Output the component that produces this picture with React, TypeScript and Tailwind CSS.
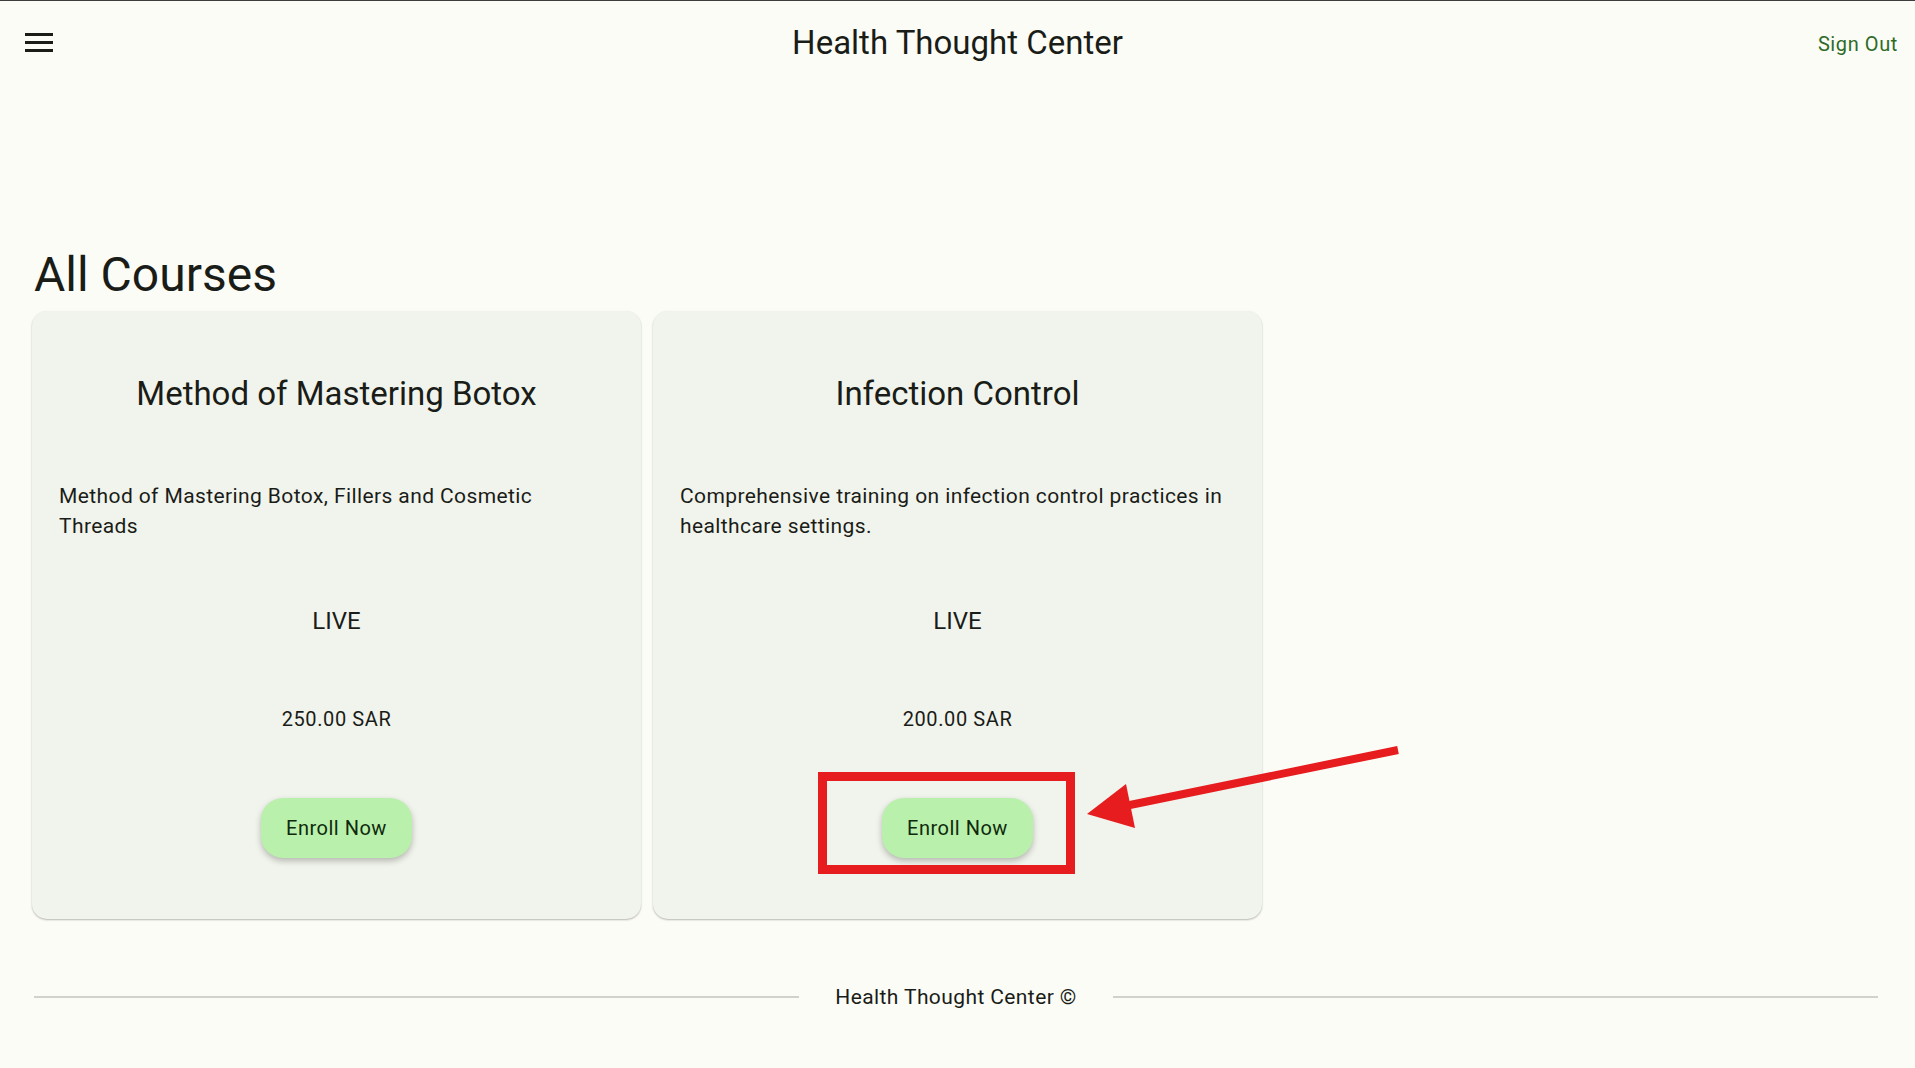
import React from "react";

type Course = { title: string; description: string; kind: string; price: string };

const courses: Course[] = [
  {
    title: "Method of Mastering Botox",
    description: "Method of Mastering Botox, Fillers and Cosmetic Threads",
    kind: "LIVE",
    price: "250.00 SAR",
  },
  {
    title: "Infection Control",
    description: "Comprehensive training on infection control practices in healthcare settings.",
    kind: "LIVE",
    price: "200.00 SAR",
  },
];

function CourseCard({ c }: { c: Course }) {
  return (
    <div className="w-[609px] h-[608px] shrink-0 rounded-[15px] bg-[#f1f4ec] shadow-[0_1px_2px_rgba(0,0,0,0.28)] flex flex-col items-center pt-[63px] pl-[27px] pr-[27px]">
      <h2 className="text-[33px] leading-[40px] text-[#1a1c18] font-normal text-center">{c.title}</h2>
      <p className="mt-[67px] self-start max-w-[549px] text-[21px] leading-[30px] tracking-[0.4px] text-[#1a1c18]">
        {c.description}
      </p>
      <div className="mt-[64px] text-[24px] leading-[32px] text-[#1a1c18]">{c.kind}</div>
      <div className="mt-[67px] text-[20px] leading-[30px] tracking-[0.6px] text-[#1a1c18]">{c.price}</div>
      <button className="mt-[64px] h-[60px] px-[25px] rounded-[22px] bg-[#b9f0ab] text-[#0f2a0c] text-[20px] leading-[30px] tracking-[0.5px] shadow-[0_3px_6px_rgba(0,0,0,0.25)]">
        Enroll Now
      </button>
    </div>
  );
}

export default function App() {
  return (
    <div className="relative min-h-screen w-full bg-[#fbfcf6] border-t border-[#3d3d3d] font-['Roboto',sans-serif] text-[#1a1c18]">
      <header className="h-[82px] flex items-center px-[17px]">
        <div className="flex-1 flex items-center">
          <div className="ml-[8px] w-[28px] h-[19px] flex flex-col justify-between">
            <span className="block h-[3px] w-full bg-[#1a1c18]" />
            <span className="block h-[3px] w-full bg-[#1a1c18]" />
            <span className="block h-[3px] w-full bg-[#1a1c18]" />
          </div>
        </div>
        <h1 className="mt-[2px] text-[33px] leading-[40px] font-normal text-[#1a1c18]">Health Thought Center</h1>
        <div className="flex-1 flex justify-end">
          <span className="text-[20px] leading-[30px] tracking-[0.6px] text-[#2f6b28] mt-[3px]">Sign Out</span>
        </div>
      </header>

      <main className="px-[32px]">
        <h1 className="mt-[164px] pl-[2px] text-[48px] leading-[56px] font-normal text-[#1a1c18]">All Courses</h1>
        <div className="mt-[8px] flex gap-[12px]">
          {courses.map((c) => (
            <CourseCard key={c.title} c={c} />
          ))}
        </div>
      </main>

      <footer className="mt-[63px] flex items-center pl-[34px] pr-[37px]">
        <div className="flex-1 h-[2px] bg-[#cfd3ca]" />
        <span className="px-[36px] text-[21px] leading-[30px] tracking-[0.4px] text-[#1a1c18]">Health Thought Center ©</span>
        <div className="flex-1 h-[2px] bg-[#cfd3ca]" />
      </footer>

      {/* annotation overlay */}
      <div className="absolute left-[818px] top-[771px] w-[257px] h-[102px] border-[9px] border-[#e61c1f] pointer-events-none" />
      <svg
        className="absolute left-[1080px] top-[740px] pointer-events-none"
        width="330"
        height="100"
        viewBox="0 0 330 100"
      >
        <line x1="318" y1="9" x2="45" y2="65" stroke="#e61c1f" strokeWidth="8" />
        <polygon points="7,73 46,43 55,87" fill="#e61c1f" />
      </svg>
    </div>
  );
}
